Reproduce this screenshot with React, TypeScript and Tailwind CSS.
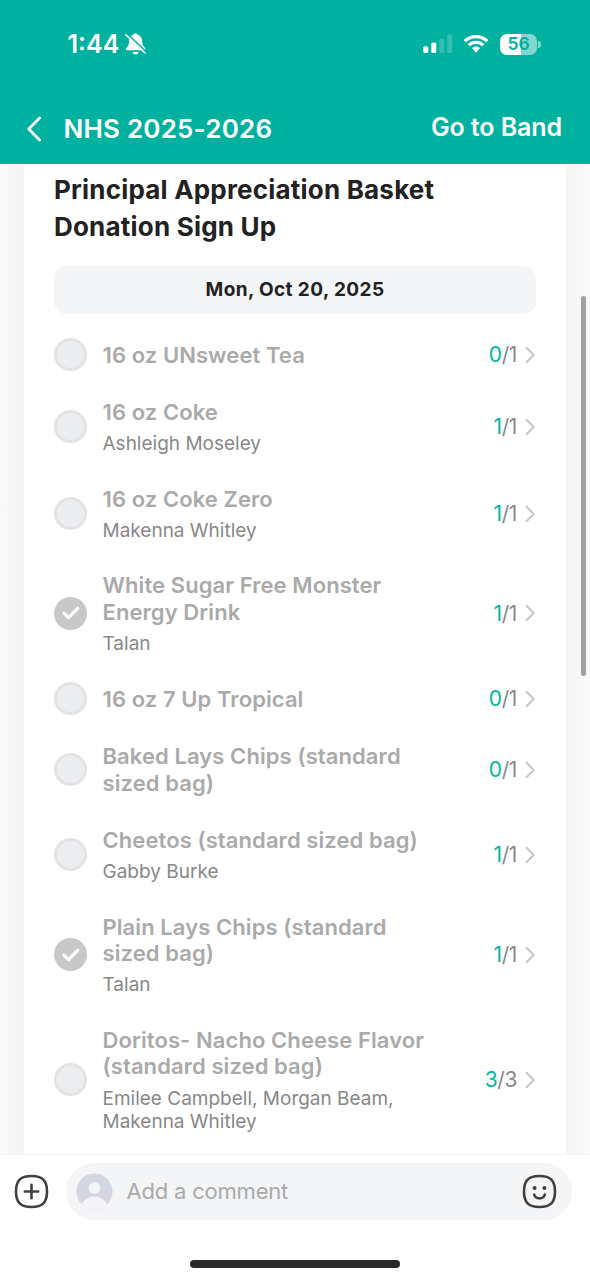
type SignUpItem = {
  title: string
  members?: string
  checked?: boolean
  count: number
  total: number
}

const items: SignUpItem[] = [
  { title: '16 oz UNsweet Tea', count: 0, total: 1 },
  { title: '16 oz Coke', members: 'Ashleigh Moseley', count: 1, total: 1 },
  { title: '16 oz Coke Zero', members: 'Makenna Whitley', count: 1, total: 1 },
  { title: 'White Sugar Free Monster Energy Drink', members: 'Talan', checked: true, count: 1, total: 1 },
  { title: '16 oz 7 Up Tropical', count: 0, total: 1 },
  { title: 'Baked Lays Chips (standard sized bag)', count: 0, total: 1 },
  { title: 'Cheetos (standard sized bag)', members: 'Gabby Burke', count: 1, total: 1 },
  { title: 'Plain Lays Chips (standard sized bag)', members: 'Talan', checked: true, count: 1, total: 1 },
  {
    title: 'Doritos- Nacho Cheese Flavor (standard sized bag)',
    members: 'Emilee Campbell, Morgan Beam, Makenna Whitley',
    count: 3,
    total: 3,
  },
]

function BellOffIcon() {
  return (
    <svg width="22" height="24" viewBox="0 0 22 24" fill="none">
      <path
        d="M10.500 1.500c1.300 0 2.200.6 2.600 1.500 2.600.8 4 3 4.100 6.200.1 3.400.8 4.600 2.200 6 .7.7 1 1.200 1 1.800 0 .8-.6 1.300-1.500 1.300H2.400c-.9 0-1.500-.5-1.500-1.300 0-.6.3-1.100 1-1.800 1.400-1.400 2.100-2.600 2.200-6C4.200 6 5.400 3.800 7.900 3c.4-.9 1.300-1.500 2.600-1.500z"
        fill="white"
      />
      <path d="M7.500 19.900h6.200c-.4 1.500-1.500 2.300-3.100 2.300s-2.700-.8-3.100-2.300z" fill="white" />
      <path d="M1.600 1.400 21.400 19.800" stroke="#00b1a0" strokeWidth="1.500" />
      <path d="M.9 2.900 20 21" stroke="white" strokeWidth="1.600" strokeLinecap="round" />
    </svg>
  )
}

function SignalIcon() {
  return (
    <svg width="30" height="20" viewBox="0 0 30 20" fill="white">
      <rect x="0.300" y="12.300" width="5" height="6.700" rx="1.500" />
      <rect x="8.300" y="8.500" width="5" height="10.500" rx="1.500" />
      <rect x="16.200" y="4.500" width="5" height="14.500" rx="1.500" opacity="0.200" />
      <rect x="24.200" y="0.600" width="5" height="18.400" rx="1.500" opacity="0.200" />
    </svg>
  )
}

function WifiIcon() {
  return (
    <svg width="26" height="20" viewBox="0 0 26 20" fill="none" stroke="white">
      <path d="M1.800 7.100C4.900 4.200 8.800 2.600 13 2.600s8.100 1.600 11.200 4.500" strokeWidth="3.300" />
      <path d="M5.700 11.200C7.700 9.300 10.200 8.300 13 8.300s5.300 1 7.300 2.900" strokeWidth="3.200" />
      <path d="M13 12.400c1.600 0 3 .6 4 1.500L13 18.800l-4-4.900c1-.9 2.400-1.500 4-1.500z" fill="white" stroke="none" />
    </svg>
  )
}

function BatteryIcon() {
  return (
    <div className="flex items-center gap-[1px]">
      <div className="flex h-[21px] w-[37px] items-center justify-center rounded-[7px] bg-linear-to-r from-white from-56% to-[#80d8d0] to-56%">
        <span className="text-[17.500px] leading-none font-semibold text-[#00b1a0]">56</span>
      </div>
      <div className="h-[7px] w-[3px] rounded-r-full bg-[#80d8d0]" />
    </div>
  )
}

function StatusBar() {
  return (
    <div className="flex h-[88px] items-center justify-between pr-[49px] pl-[67.500px]">
      <div className="flex items-center gap-[5.500px]">
        <span className="pt-[1px] text-[25px] font-semibold text-white">1:44</span>
        <BellOffIcon />
      </div>
      <div className="flex items-center">
        <SignalIcon />
        <div className="ml-[10px]">
          <WifiIcon />
        </div>
        <div className="ml-[11px]">
          <BatteryIcon />
        </div>
      </div>
    </div>
  )
}

function NavBar() {
  return (
    <div className="flex h-[76px] items-center pt-[5px] pr-[28px] pl-[26px] text-white">
      <svg width="16" height="26" viewBox="0 0 16 26" fill="none">
        <path d="M13.600 2 2.700 13l10.900 11" stroke="white" strokeWidth="2.800" strokeLinecap="round" strokeLinejoin="round" />
      </svg>
      <h1 className="ml-[21.500px] flex-1 text-[26px] font-semibold tracking-[0.200px]">NHS 2025-2026</h1>
      <button className="pb-[2px] text-[25px] font-semibold tracking-[-0.100px]">Go to Band</button>
    </div>
  )
}

function CheckCircle({ checked }: { checked?: boolean }) {
  if (!checked) {
    return <div className="-my-[5px] size-[33px] shrink-0 rounded-full border-[3px] border-[#e1e3e4] bg-[#ecedef]" />
  }
  return (
    <div className="-my-[5px] flex size-[33px] shrink-0 items-center justify-center rounded-full bg-[#c8c8c8]">
      <svg width="20" height="16" viewBox="0 0 20 16" fill="none">
        <path d="M3 8.300 7.500 12.600 16.700 3.300" stroke="white" strokeWidth="3.200" strokeLinecap="round" strokeLinejoin="round" />
      </svg>
    </div>
  )
}

function ItemRow({ item }: { item: SignUpItem }) {
  return (
    <li className="flex items-center py-[15.500px]">
      <CheckCircle checked={item.checked} />
      <div className="ml-[15.500px] w-[340px]">
        <p className="text-[22px] leading-[26.500px] font-semibold tracking-[0.080px] text-[#aaaaaa]">{item.title}</p>
        {item.members && (
          <p className="mt-[6.700px] mb-[-1px] text-[19px] leading-[23.500px] text-[#888888]">{item.members}</p>
        )}
      </div>
      <div className="ml-auto flex items-center gap-[8px]">
        <span className="text-[21px] leading-none tracking-[-0.400px] text-[#888888]">
          <span className="text-[#00b5a3]">{item.count}</span>/{item.total}
        </span>
        <svg width="11" height="18" viewBox="0 0 11 18" fill="none">
          <path d="M1.500 1.800 8.700 9l-7.200 7.200" stroke="#c6c6c6" strokeWidth="2" strokeLinecap="round" strokeLinejoin="round" />
        </svg>
      </div>
    </li>
  )
}

function CommentBar() {
  return (
    <footer className="h-[126px] shrink-0 border-t border-[#f3f3f3] bg-white">
      <div className="flex items-center pt-[8px] pl-[14px]">
        <svg width="35" height="35" viewBox="0 0 35 35" fill="none" stroke="#404040" strokeLinecap="round">
          <path d="M17.500 2C28.500 2 33 6.500 33 17.500S28.500 33 17.500 33 2 28.500 2 17.500 6.500 2 17.500 2z" strokeWidth="2.600" />
          <path d="M17.500 10.800v13.400M10.800 17.500h13.400" strokeWidth="2.600" />
        </svg>
        <div className="ml-[17px] flex h-[57px] w-[506px] items-center rounded-full bg-[#f4f5f7] pr-[15.500px] pl-[10px]">
          <svg width="37" height="37" viewBox="0 0 37 37">
            <clipPath id="avatar">
              <circle cx="18.500" cy="18.500" r="18" />
            </clipPath>
            <g clipPath="url(#avatar)">
              <rect width="37" height="37" fill="#d6d6e3" />
              <circle cx="18.500" cy="15" r="5.900" fill="#f3f4f8" />
              <ellipse cx="18.500" cy="36" rx="13.500" ry="12.500" fill="#f3f4f8" />
            </g>
          </svg>
          <span className="ml-[13.500px] flex-1 text-[22px] tracking-[-0.200px] text-[#aaaaaa]">Add a comment</span>
          <svg width="35" height="35" viewBox="0 0 35 35" fill="none" stroke="#404040" strokeLinecap="round">
            <path d="M17.500 2C28.500 2 33 6.500 33 17.500S28.500 33 17.500 33 2 28.500 2 17.500 6.500 2 17.500 2z" strokeWidth="2.600" />
            <circle cx="12.600" cy="13.900" r="2" fill="#404040" stroke="none" />
            <circle cx="22.400" cy="13.900" r="2" fill="#404040" stroke="none" />
            <path d="M12.100 20.600c.9 2.500 2.900 3.800 5.400 3.800s4.500-1.300 5.400-3.800" strokeWidth="2.600" />
          </svg>
        </div>
      </div>
      <div className="mx-auto mt-[40px] h-[8px] w-[210px] rounded-full bg-[#292929]" />
    </footer>
  )
}

export default function App() {
  return (
    <div className="relative flex h-[1280px] w-[590px] flex-col overflow-hidden bg-white font-['Inter',sans-serif]">
      <header className="h-[164px] shrink-0 bg-[#00b1a0]">
        <StatusBar />
        <NavBar />
      </header>

      <main className="flex min-h-0 flex-1">
        <div className="w-[24px] shrink-0 bg-linear-to-r from-[#fafafa] to-[#f4f4f4]" />
        <div className="flex-1 px-[30px] pt-[8px]">
          <h2 className="text-[26px] leading-[36.500px] font-bold tracking-[0.200px] text-[#222222]">
            Principal Appreciation Basket Donation Sign Up
          </h2>
          <div className="mt-[21px] flex h-[48px] items-center justify-center rounded-[13px] bg-[#f4f5f7] pt-[1px] text-[19px] font-bold tracking-[0.400px] text-[#222222]">
            Mon, Oct 20, 2025
          </div>
          <ul className="mt-[12px]">
            {items.map((item) => (
              <ItemRow key={item.title} item={item} />
            ))}
          </ul>
        </div>
        <div className="w-[24px] shrink-0 bg-linear-to-r from-[#f4f4f4] to-[#fafafa]" />
      </main>

      <CommentBar />

      {/* scroll indicator */}
      <div className="absolute top-[296px] right-[4px] h-[380px] w-[5px] rounded-full bg-[#a0a0a0]" />
    </div>
  )
}
